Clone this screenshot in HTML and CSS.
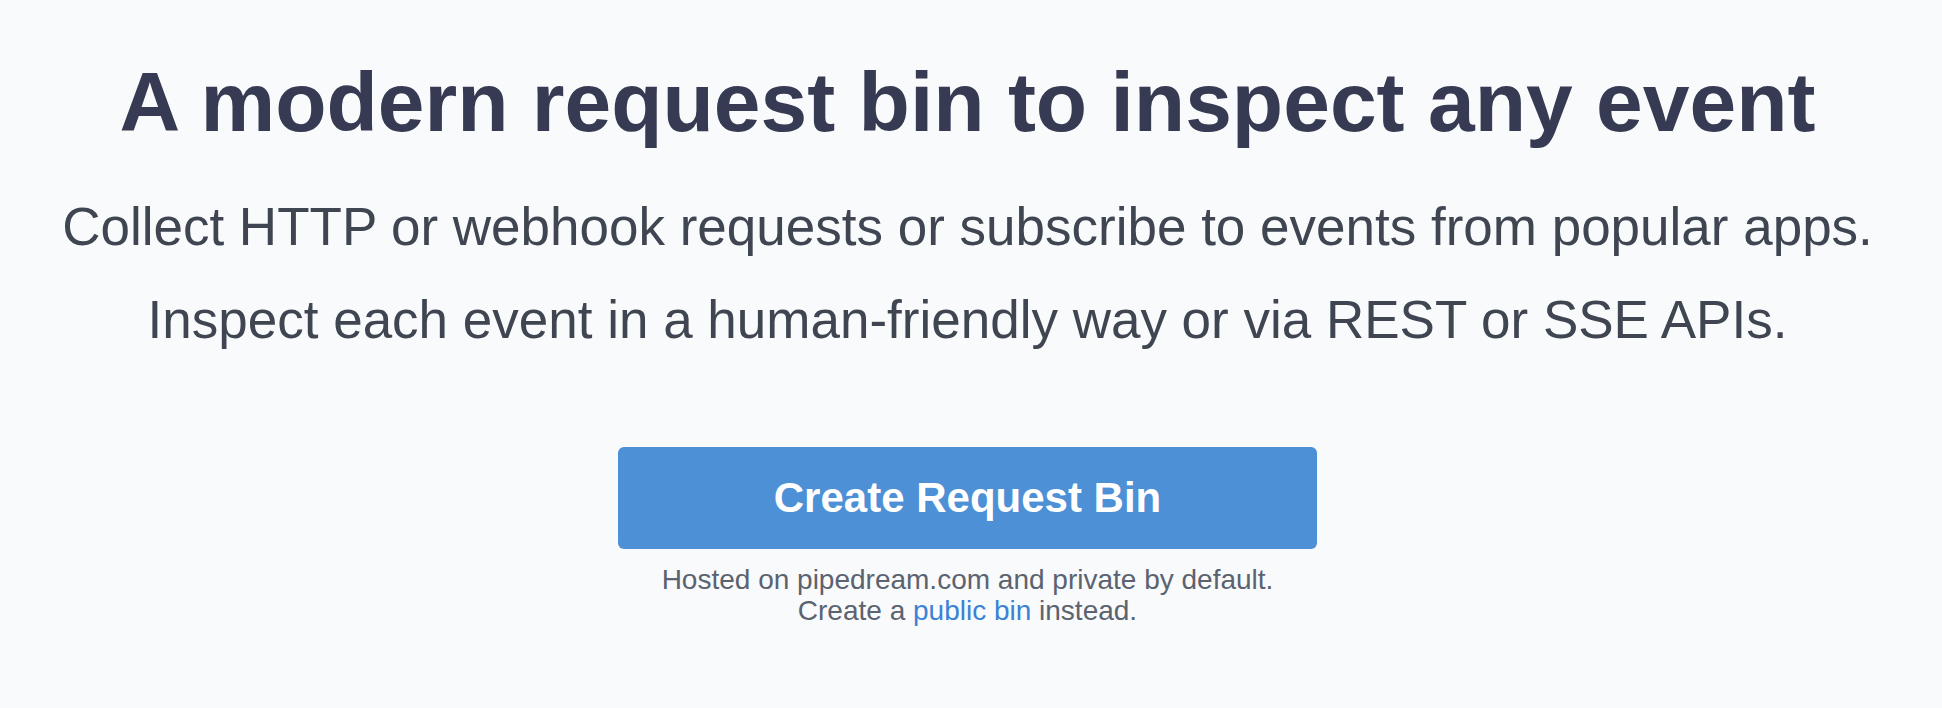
FILE: index.html
```html
<!DOCTYPE html>
<html lang="en">
<head>
    <meta charset="UTF-8">
    <meta name="viewport" content="width=device-width, initial-scale=1.0">
    <title>RequestBin - A modern request bin to inspect any event</title>
    <link rel="stylesheet" href="styles.css">
</head>

<body>

    <div class="hero">
        <h1 class="hero-title">A modern request bin to inspect any event</h1>

        <div class="hero-sub">
            <p>Collect HTTP or webhook requests or subscribe to events from popular apps.</p>
            <p>Inspect each event in a human-friendly way or via REST or SSE APIs.</p>
        </div>

        <button class="create-btn" type="button">Create Request Bin</button>

        <p class="hosted">
            Hosted on pipedream.com and private by default.<br>
            Create a <a href="#" class="public-link">public bin</a> instead.
        </p>
    </div>

</body>
</html>
```

FILE: styles.css
```css
body {
    margin: 0;
    background-color: #f9fafb;
    font-family: "Helvetica Neue", Helvetica, "Liberation Sans", Arial, sans-serif;
}

.hero {
    display: flex;
    flex-direction: column;
    align-items: center;
    text-align: center;
    padding-top: 60px;
    padding-right: 7px;
}

.hero-title {
    margin: 0;
    font-size: 84px;
    line-height: 1;
    font-weight: bold;
    color: #363a52;
}

.hero-sub {
    margin-top: 43px;
    color: #3f4651;
}

.hero-sub p {
    margin: 0 0 13px;
    font-size: 53px;
    line-height: 1.5;
    font-weight: 300;
}

.create-btn {
    margin-top: 75px;
    width: 699px;
    height: 102px;
    border: none;
    border-radius: 6px;
    background-color: #4d90d6;
    color: #ffffff;
    font-family: inherit;
    font-size: 42px;
    font-weight: bold;
    cursor: pointer;
}

.hosted {
    margin: 15px 0 0;
    font-size: 28px;
    line-height: 31px;
    color: #5b6370;
}

.public-link {
    color: #3b82d6;
    text-decoration: none;
}
```
